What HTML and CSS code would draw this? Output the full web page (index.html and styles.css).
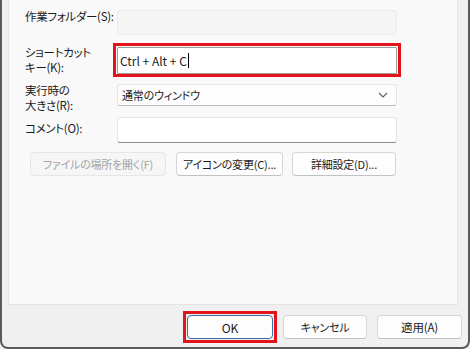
FILE: index.html
```html
<!DOCTYPE html>
<html lang="ja">
<head>
    <meta charset="UTF-8"/>
    <meta name="viewport" content="width=device-width, initial-scale=1.0"/>
    <link rel="stylesheet" href="styles.css">
</head>
<body>
<main class="dialog">
    <section class="dialog__sheet">
        <div class="props">
            <span class="props__label props__label--dir">作業フォルダー(S):</span>
            <div class="props__field props__field--disabled"></div>

            <span class="props__label props__label--key">ショートカット<br>キー(K):</span>
            <div class="marked marked--field">
                <div class="props__field props__field--key">
                    <span>Ctrl + Alt + C</span><span class="caret"></span>
                </div>
            </div>

            <span class="props__label props__label--run">実行時の<br>大きさ(R):</span>
            <div class="props__field props__field--select">
                <span>通常のウィンドウ</span>
                <svg class="chevron" viewBox="0 0 10 6" aria-hidden="true">
                    <path d="M1 1 L5 5 L9 1"/>
                </svg>
            </div>

            <span class="props__label props__label--comment">コメント(O):</span>
            <div class="props__field props__field--comment"></div>

            <div class="props__actions">
                <button class="btn btn--wide" disabled>ファイルの場所を開く(F)</button>
                <button class="btn btn--icon">アイコンの変更(C)...</button>
                <button class="btn btn--adv">詳細設定(D)...</button>
            </div>
        </div>
    </section>
    <footer class="dialog__footer">
        <span class="marked marked--btn"><button class="btn btn--ok">OK</button></span>
        <button class="btn btn--cancel">キャンセル</button>
        <button class="btn btn--apply">適用(A)</button>
    </footer>
</main>
</body>
</html>
```

FILE: styles.css
```css
:root {
    --window: #f0f0f0;
    --sheet: #f9f9f9;
    --edge: #5b5b5b;
    --line: #e3e3e3;
    --text: #1b1b1b;
    --muted: #a3a3a3;
    --mark: #e3131b;
}

* {
    box-sizing: border-box;
}

html, body {
    margin: 0;
    width: 470px;
    height: 349px;
    overflow: hidden;
    background: var(--window);
}

body {
    font-family: "Noto Sans CJK JP", "Noto Sans", sans-serif;
    font-size: 12px;
    font-feature-settings: "palt";
    color: var(--text);
}

.dialog {
    height: 349px;
    display: flex;
    flex-direction: column;
    background: var(--window);
    border: 2px solid var(--edge);
    border-top: none;
    border-radius: 0 0 8px 8px;
}

.dialog__sheet {
    height: 305px;
    margin: 0 10px 0 6px;
    padding: 10px 0 0 16px;
    background: var(--sheet);
    border: 1px solid var(--line);
    border-top: none;
}

.props {
    display: grid;
    grid-template-columns: 92px 280px;
    grid-template-rows: 25px 29px 22px 27px 24px;
    row-gap: 10px;
}

.props__label {
    align-self: start;
    font-size: 11.5px;
    letter-spacing: -0.3px;
    line-height: 15px;
    white-space: nowrap;
}

.props__label--dir {
    margin-top: -1px;
}

.props__label--key {
    margin-top: 0;
}

.props__label--run {
    margin-top: -1px;
}

.props__label--comment {
    margin-top: 5px;
}

.props__field {
    display: flex;
    align-items: center;
    padding: 0 4px;
    border: 1px solid #e5e5e5;
    border-bottom-color: #8a8a8a;
    border-radius: 3px;
    background: #ffffff;
}

.props__field--disabled {
    background: #f5f5f5;
    border-color: #ebebeb;
}

.props__field--key {
    height: 27px;
    padding-left: 2px;
    border-color: #9c9c9c;
    border-radius: 1px;
}

.props__field--select {
    justify-content: space-between;
    padding: 0 8px 0 4px;
    font-size: 11px;
    letter-spacing: -0.2px;
    background: #fdfdfd;
    border-bottom-color: #bdbdbd;
}

.props__field--comment {
    align-self: end;
    height: 26px;
}

.caret {
    display: inline-block;
    width: 1px;
    height: 15px;
    margin-left: 1px;
    background: #000000;
}

.chevron {
    width: 10px;
    height: 6px;
    fill: none;
    stroke: #5f5f5f;
    stroke-width: 1.1;
}

.props__actions {
    grid-column: 1 / 3;
    display: flex;
    gap: 9px;
    padding-left: 5px;
    margin-top: -1px;
}

.btn {
    height: 24px;
    padding: 0;
    font: inherit;
    font-size: 11px;
    letter-spacing: -0.2px;
    color: var(--text);
    background: #fdfdfd;
    border: 1px solid #d6d6d6;
    border-bottom-color: #c2c2c2;
    border-radius: 4px;
}

.btn:disabled {
    color: var(--muted);
    background: #f6f6f6;
    border-color: #e6e6e6;
}

.btn--wide {
    width: 136px;
    margin-right: 1px;
}

.btn--icon {
    width: 107px;
}

.btn--adv {
    width: 104px;
}

.dialog__footer {
    display: flex;
    justify-content: flex-end;
    align-items: flex-start;
    gap: 10px;
    padding: 10px 6px 0 0;
}

.btn--ok {
    display: block;
    width: 86px;
    font-size: 12px;
    border-color: #3a6ea5;
}

.btn--cancel {
    width: 84px;
}

.btn--apply {
    width: 85px;
    font-size: 11.5px;
}

/* red annotation frames, kept out of the layout by negative margins */
.marked {
    display: block;
    padding: 1px;
    margin: -4px;
    border: 3px solid var(--mark);
}

.marked--field {
    align-self: end;
    margin-bottom: -3px;
    padding-bottom: 0;
}
```
